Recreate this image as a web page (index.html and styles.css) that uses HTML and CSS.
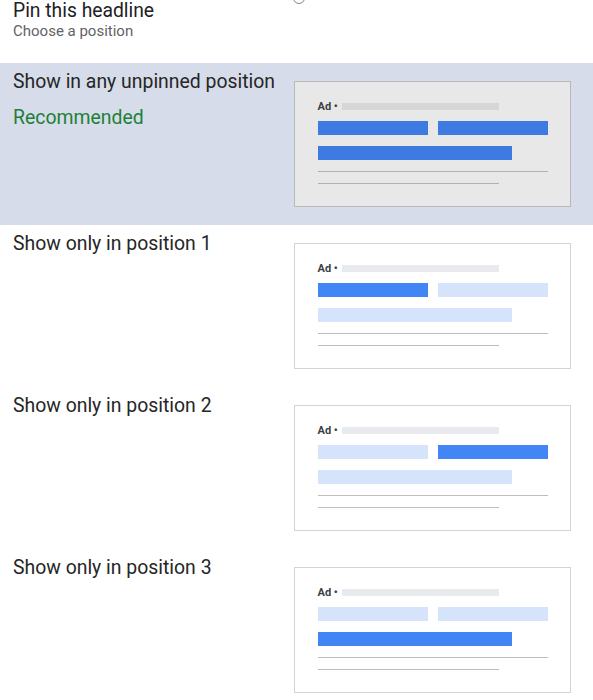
FILE: index.html
```html
<!DOCTYPE html>
<html lang="en">
<head>
<meta charset="utf-8">
<title>Pin this headline</title>
<link rel="stylesheet" href="styles.css">
</head>
<body>
<div class="page">
  <span class="radio-peek"></span>
  <header class="head">
    <div class="title">Pin this headline</div>
    <div class="sub">Choose a position</div>
  </header>
  <div class="options">
    <div class="opt selected">
      <div class="opt-text">
        <div class="label">Show in any unpinned position</div>
        <div class="rec">Recommended</div>
      </div>
      <div class="card">
        <div class="ad-row"><span class="ad">Ad •</span><span class="url"></span></div>
        <div class="bars"><span class="bar on"></span><span class="bar on"></span></div>
        <span class="bar wide on"></span>
        <span class="line l1"></span>
        <span class="line l2"></span>
      </div>
    </div>
    <div class="opt">
      <div class="opt-text"><div class="label">Show only in position 1</div></div>
      <div class="card">
        <div class="ad-row"><span class="ad">Ad •</span><span class="url"></span></div>
        <div class="bars"><span class="bar on"></span><span class="bar"></span></div>
        <span class="bar wide"></span>
        <span class="line l1"></span>
        <span class="line l2"></span>
      </div>
    </div>
    <div class="opt">
      <div class="opt-text"><div class="label">Show only in position 2</div></div>
      <div class="card">
        <div class="ad-row"><span class="ad">Ad •</span><span class="url"></span></div>
        <div class="bars"><span class="bar"></span><span class="bar on"></span></div>
        <span class="bar wide"></span>
        <span class="line l1"></span>
        <span class="line l2"></span>
      </div>
    </div>
    <div class="opt">
      <div class="opt-text"><div class="label">Show only in position 3</div></div>
      <div class="card">
        <div class="ad-row"><span class="ad">Ad •</span><span class="url"></span></div>
        <div class="bars"><span class="bar"></span><span class="bar"></span></div>
        <span class="bar wide on"></span>
        <span class="line l1"></span>
        <span class="line l2"></span>
      </div>
    </div>
  </div>
</div>
</body>
</html>
```
FILE: styles.css
```css
* { box-sizing: border-box; }
html, body { margin: 0; padding: 0; background: #ffffff; }
body {
  font-family: Roboto, "Noto Sans", "Liberation Sans", sans-serif;
  color: #202124;
  width: 593px;
  height: 700px;
  overflow: hidden;
}
.page { position: relative; }
.radio-peek {
  position: absolute;
  left: 293px;
  top: -8px;
  width: 12px;
  height: 12px;
  border: 1px solid #80868b;
  border-radius: 50%;
}
.head { padding-left: 13px; height: 40px; }
.title { font-size: 19.3px; line-height: 22px; }
.sub { font-size: 15px; line-height: 18px; color: #5f6368; }
.options { margin-top: 23px; }
.opt {
  display: flex;
  justify-content: space-between;
  align-items: flex-start;
  padding: 7px 22px 18px 13px;
  height: 162px;
}
.opt.selected { background: #d6dce9; }
.label { font-size: 19.4px; line-height: 24px; color: #262626; }
.rec { font-size: 19.4px; line-height: 24px; color: #1e8038; margin-top: 12px; }
.card {
  margin-top: 11px;
  width: 277px;
  height: 126px;
  border: 1.5px solid #d4d4d4;
  background: #ffffff;
  display: flex;
  flex-direction: column;
  align-items: flex-start;
  padding: 18px 0 0 22.5px;
}
.selected .card { background: #e8e8e8; border-color: #b8b8b8; }
.ad-row { display: flex; align-items: center; height: 13px; }
.ad {
  width: 24px;
  font-size: 11px;
  font-weight: 700;
  color: #3c4043;
  line-height: 13px;
  white-space: nowrap;
}
.url { width: 157px; height: 7px; background: #e8eaed; }
.selected .url { background: #d6d6d6; }
.bars { display: flex; gap: 10px; margin-top: 8px; }
.bar { display: block; width: 110px; height: 13.5px; background: #d6e4fb; }
.bar.on { background: #4285f4; }
.selected .bar.on { background: #3d7be3; }
.bar.wide { width: 194px; margin-top: 11.5px; }
.line { display: block; height: 1.5px; background: #bdbdbd; }
.l1 { width: 230px; margin-top: 11px; }
.l2 { width: 181px; margin-top: 10.5px; }
.selected .line { background: #b0b0b0; }
```
